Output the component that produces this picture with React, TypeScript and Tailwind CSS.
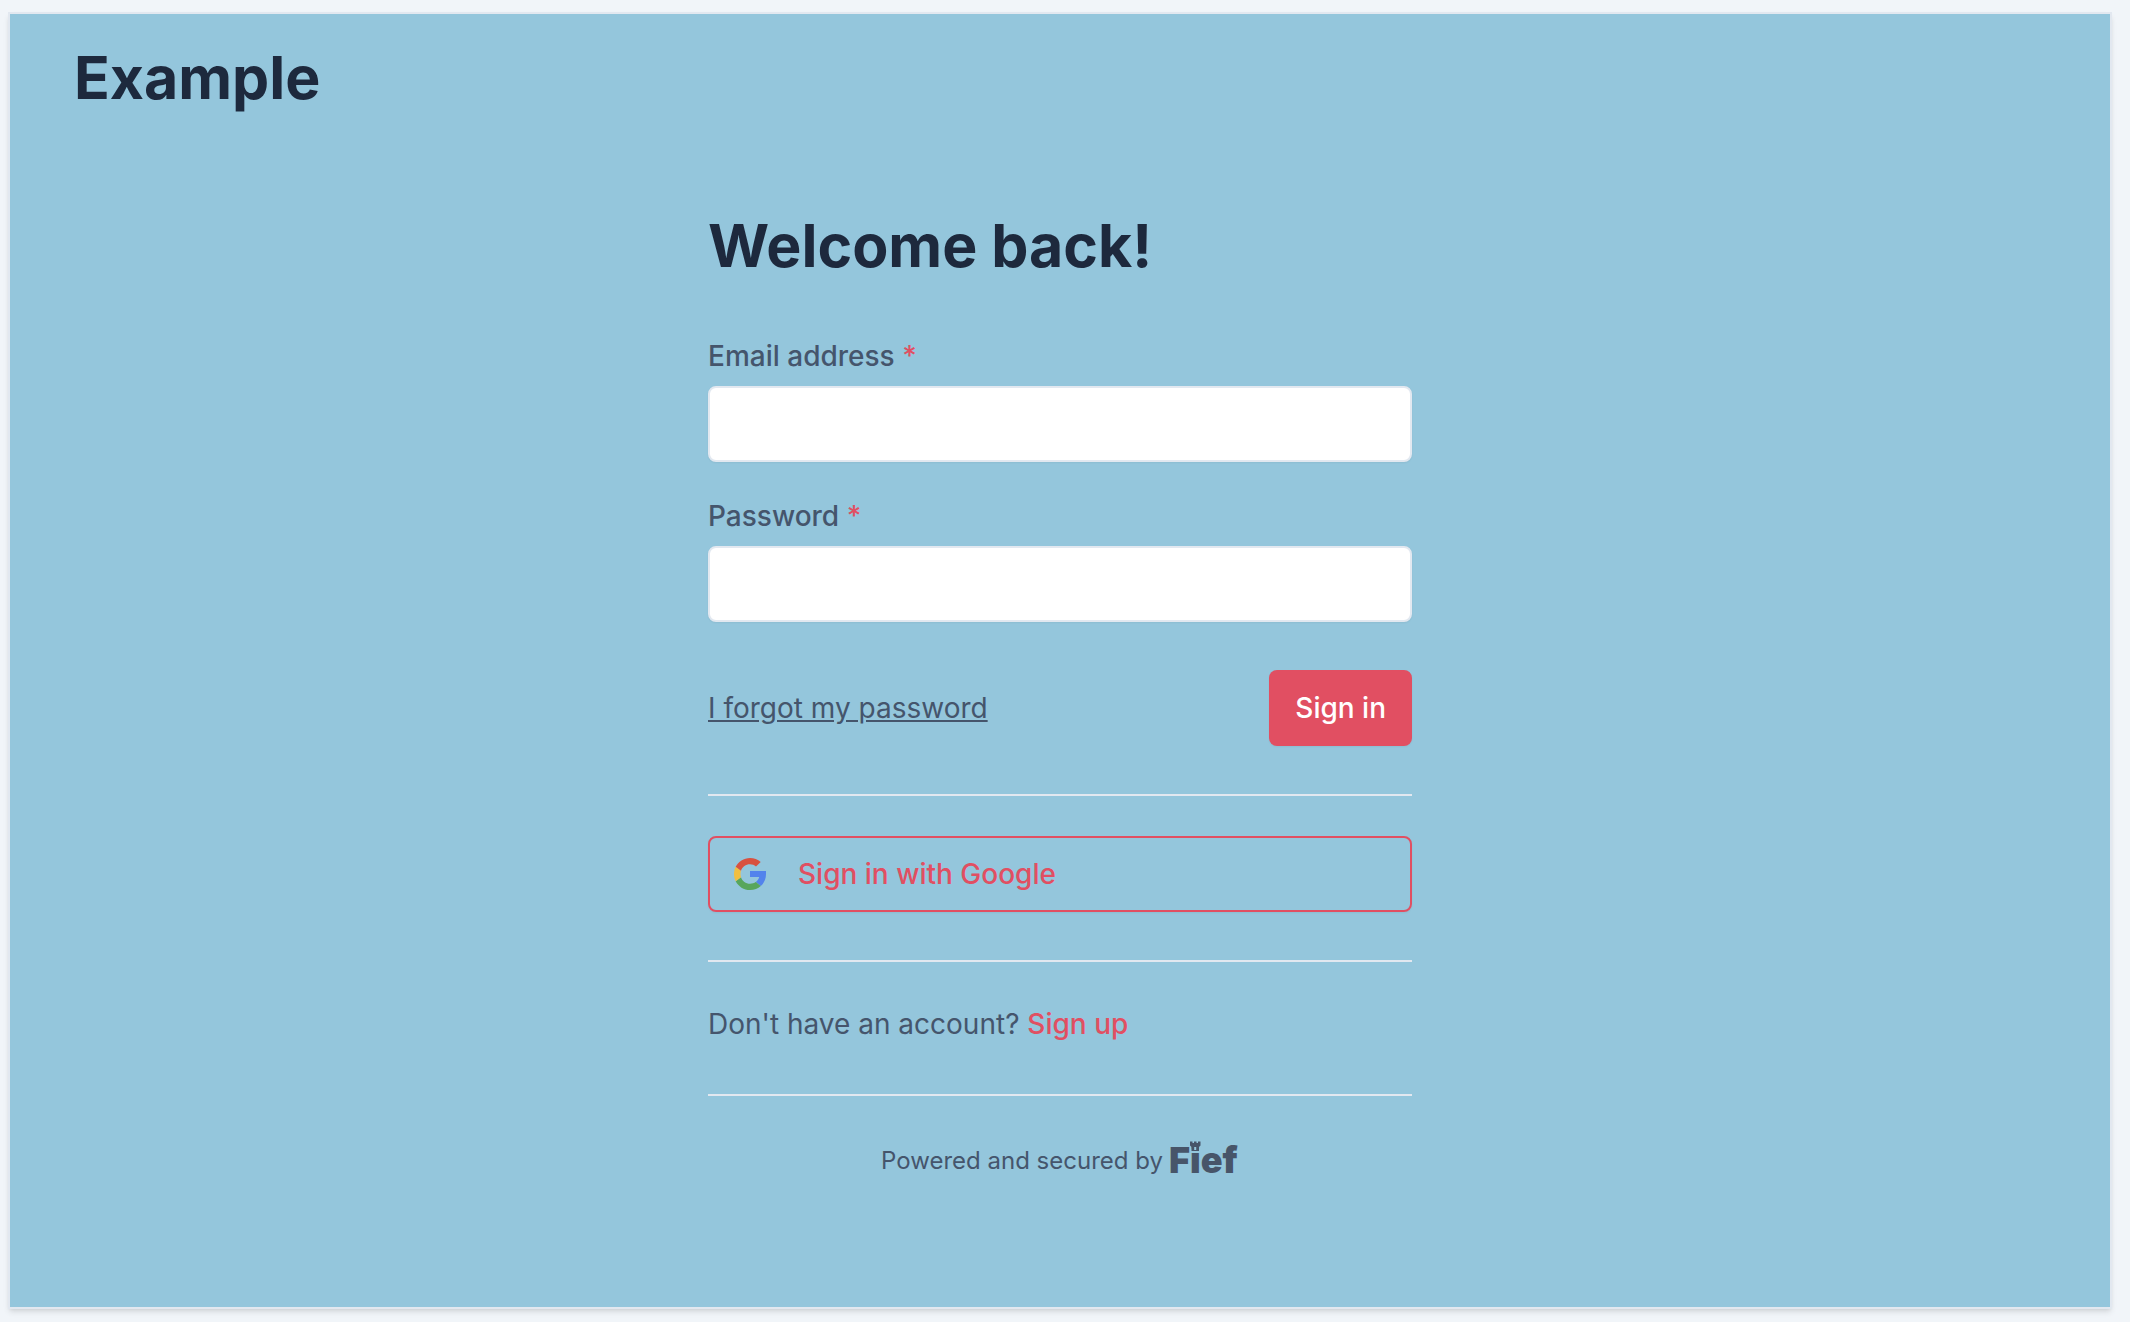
import React from 'react';

function Field({ id, label, type }: { id: string; label: string; type: string }) {
  return (
    <div className="flex flex-col gap-2.5">
      <label htmlFor={id} className="text-[28px] leading-10 font-medium">
        {label} <span className="text-[#e14f62]">*</span>
      </label>
      <input
        id={id}
        type={type}
        required
        className="h-19 w-full rounded-lg border-2 border-slate-200 bg-white px-6 text-[28px] text-slate-800 shadow-xs outline-none"
      />
    </div>
  );
}

function GoogleIcon() {
  return (
    <svg viewBox="0 0 32 32" className="size-8 shrink-0" aria-hidden="true">
      <path fill="#5383ec" d="M32 13H16v6h9.200c-.5 2.100-1.700 3.900-3.400 5l5 4.100C30.100 25.200 32 21 32 16.300z" />
      <path fill="#58a65c" d="M16 32c4.300 0 8-1.400 10.800-3.900l-5-4.100c-1.600 1.100-3.500 1.700-5.800 1.700-4.200 0-7.700-2.600-9-6.500l-5.300 4C4.400 28.500 9.800 32 16 32z" />
      <path fill="#f1bf42" d="M7 19.200c-.7-2.100-.7-4.300 0-6.400L1.700 8.800c-2.300 4.500-2.300 9.900 0 14.400z" />
      <path fill="#d85140" d="M7 12.800c1.300-3.900 4.800-6.500 9-6.500 2.300 0 4.300.8 6 2.200l4.700-4.600C23.800 1.400 20.100 0 16 0 9.800 0 4.400 3.500 1.700 8.800z" />
    </svg>
  );
}

function FiefLogo() {
  return (
    <svg viewBox="0 0 70 48" className="-mb-2 h-12 w-[70px]" role="img" aria-label="Fief">
      <text x="0" y="36" fill="#475569" className="font-['Inter',sans-serif] text-[36px] font-black">
        Fief
      </text>
      <path fill="#475569" d="M21 4.500h2.500V6h1.500V4.500h2.500V6h1.500V4.500h2.500v4L30 10v4h-7.500v-4L21 8.500z" />
      <path fill="#94c6dc" d="M25.200 10h2v3h-2z" />
    </svg>
  );
}

export default function App() {
  return (
    <div className="min-h-screen bg-slate-100 pt-3 pr-[18px] pb-[13px] pl-2 font-['Inter',sans-serif] text-slate-600">
      <div className="flex min-h-[calc(100vh-25px)] flex-col border-2 border-slate-200 bg-[#94c6dc] shadow-md">
        <header className="px-16 pt-7">
          <div className="text-[59px] leading-[72px] font-bold text-slate-800">Example</div>
        </header>
        <main className="mx-auto w-full max-w-[704px] pt-24">
          <h1 className="text-[59px] leading-[72px] font-bold text-slate-800">Welcome back!</h1>
          <form className="mt-[54px] flex flex-col" onSubmit={(e) => e.preventDefault()}>
            <div className="flex flex-col gap-[34px]">
              <Field id="email" label="Email address" type="email" />
              <Field id="password" label="Password" type="password" />
            </div>
            <div className="mt-12 flex items-center justify-between">
              <a href="#forgot" className="text-[28px] leading-10 underline">I forgot my password</a>
              <button type="submit" className="h-19 rounded-lg bg-[#e14f62] px-[26px] text-[28px] leading-10 font-medium text-white shadow-xs">
                Sign in
              </button>
            </div>
          </form>
          <div className="mt-12 border-t-2 border-slate-200 pt-10">
            <button type="button" className="flex h-19 w-full items-center gap-8 rounded-lg border-2 border-[#e14f62] px-6 text-[28px] leading-10 font-medium text-[#e14f62] shadow-xs">
              <GoogleIcon />
              Sign in with Google
            </button>
          </div>
          <p className="mt-12 border-t-2 border-slate-200 pt-[42px] text-[28px] leading-10">
            Don't have an account?{' '}
            <a href="#signup" className="font-medium text-[#e14f62]">Sign up</a>
          </p>
          <footer className="mt-[50px] flex items-end justify-center gap-1.5 border-t-2 border-slate-200 pt-[41px] text-2xl leading-8">
            <span>Powered and secured by</span>
            <FiefLogo />
          </footer>
        </main>
      </div>
    </div>
  );
}
